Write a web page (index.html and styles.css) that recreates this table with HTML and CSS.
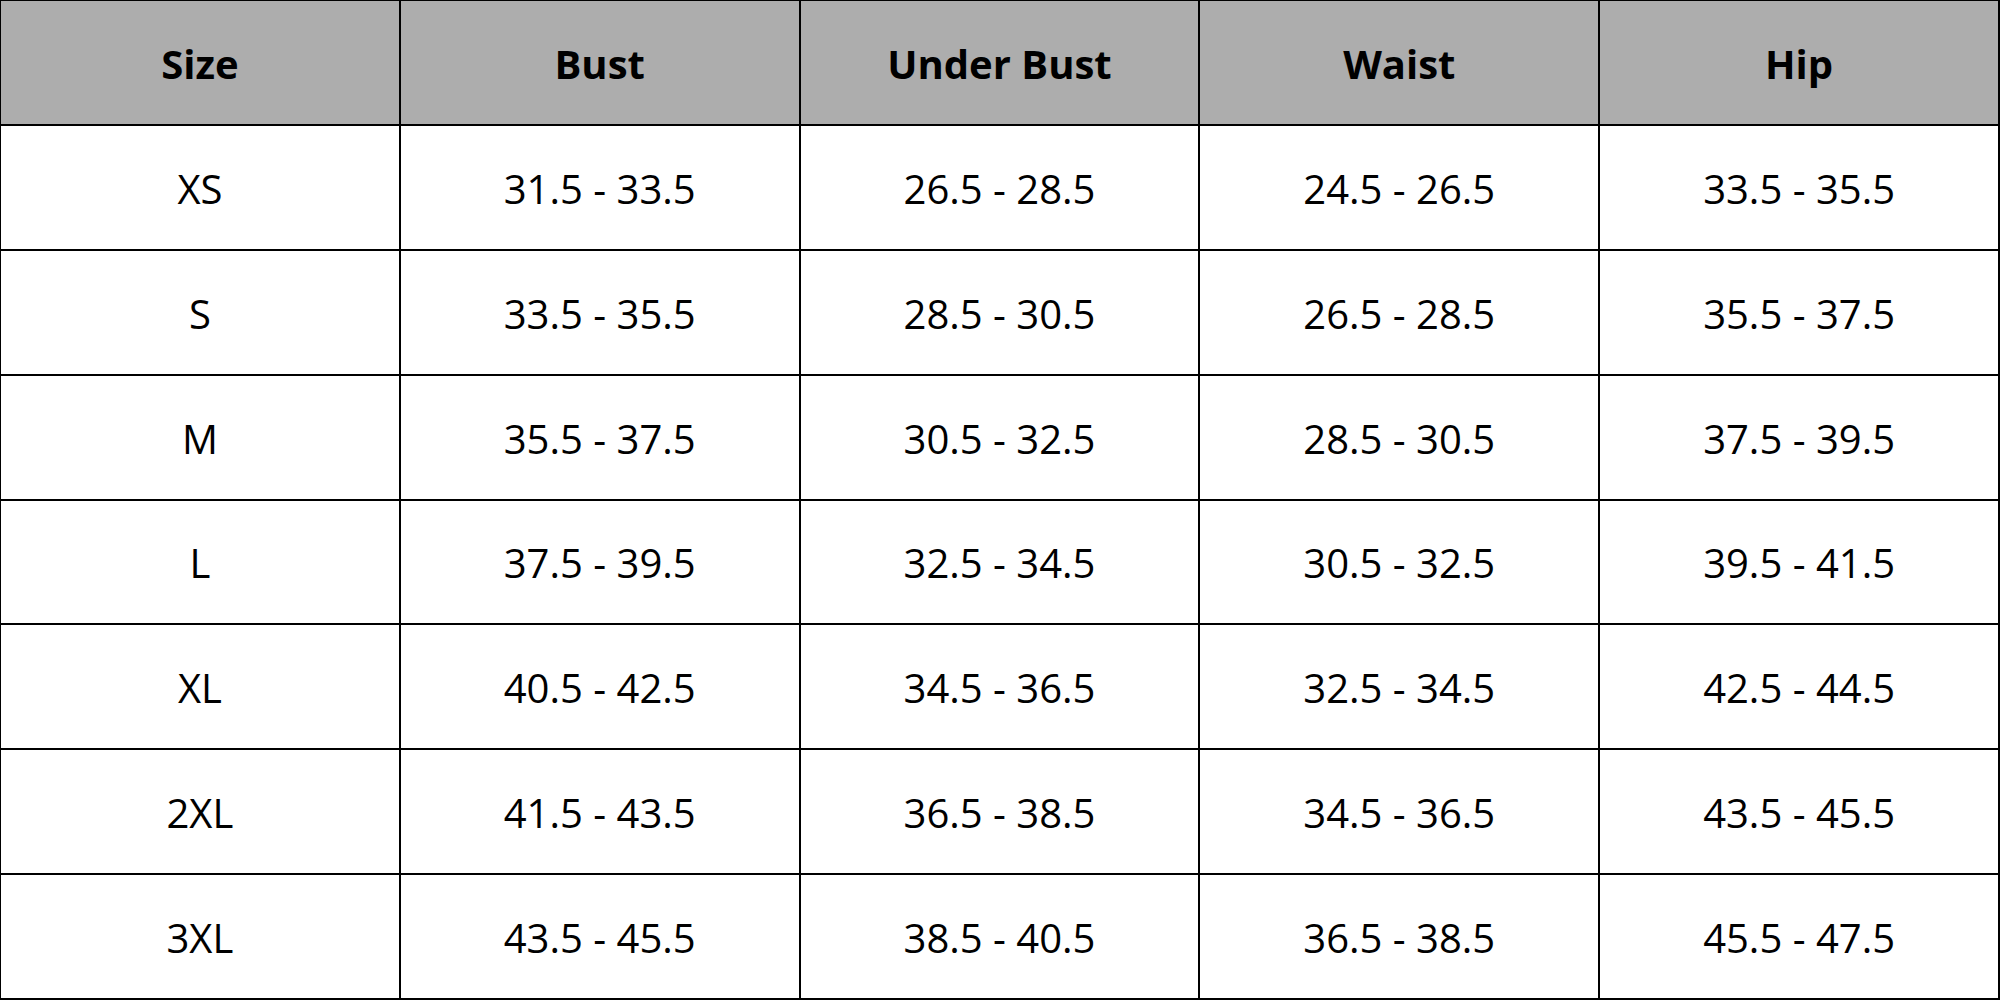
FILE: index.html
```html
<!DOCTYPE html>
<html>
<head>
<meta charset="utf-8">
<link rel="stylesheet" href="styles.css">
</head>
<body>
<div class="chart">
  <div class="cell head">Size</div>
  <div class="cell head">Bust</div>
  <div class="cell head">Under Bust</div>
  <div class="cell head">Waist</div>
  <div class="cell head">Hip</div>

  <div class="cell">XS</div>
  <div class="cell">31.5 - 33.5</div>
  <div class="cell">26.5 - 28.5</div>
  <div class="cell">24.5 - 26.5</div>
  <div class="cell">33.5 - 35.5</div>

  <div class="cell">S</div>
  <div class="cell">33.5 - 35.5</div>
  <div class="cell">28.5 - 30.5</div>
  <div class="cell">26.5 - 28.5</div>
  <div class="cell">35.5 - 37.5</div>

  <div class="cell">M</div>
  <div class="cell">35.5 - 37.5</div>
  <div class="cell">30.5 - 32.5</div>
  <div class="cell">28.5 - 30.5</div>
  <div class="cell">37.5 - 39.5</div>

  <div class="cell">L</div>
  <div class="cell">37.5 - 39.5</div>
  <div class="cell">32.5 - 34.5</div>
  <div class="cell">30.5 - 32.5</div>
  <div class="cell">39.5 - 41.5</div>

  <div class="cell">XL</div>
  <div class="cell">40.5 - 42.5</div>
  <div class="cell">34.5 - 36.5</div>
  <div class="cell">32.5 - 34.5</div>
  <div class="cell">42.5 - 44.5</div>

  <div class="cell">2XL</div>
  <div class="cell">41.5 - 43.5</div>
  <div class="cell">36.5 - 38.5</div>
  <div class="cell">34.5 - 36.5</div>
  <div class="cell">43.5 - 45.5</div>

  <div class="cell">3XL</div>
  <div class="cell">43.5 - 45.5</div>
  <div class="cell">38.5 - 40.5</div>
  <div class="cell">36.5 - 38.5</div>
  <div class="cell">45.5 - 47.5</div>
</div>
</body>
</html>
```

FILE: styles.css
```css
html, body {
  margin: 0;
  padding: 0;
  background: #ffffff;
}

.chart {
  width: 2000px;
  height: 1000px;
  box-sizing: border-box;
  border-top: 1px solid #000;
  border-left: 1px solid #000;
  display: grid;
  grid-template-columns: repeat(5, 1fr);
  grid-template-rows: repeat(8, 1fr);
  font-family: "Open Sans", "Noto Sans", sans-serif;
  color: #000;
  overflow: hidden;
}

.cell {
  box-sizing: border-box;
  border-right: 2px solid #000;
  border-bottom: 2px solid #000;
  display: flex;
  align-items: center;
  justify-content: center;
  font-size: 40px;
  font-weight: 400;
  padding-top: 2px;
}

.head {
  background: #adadad;
  font-weight: 700;
}
```
